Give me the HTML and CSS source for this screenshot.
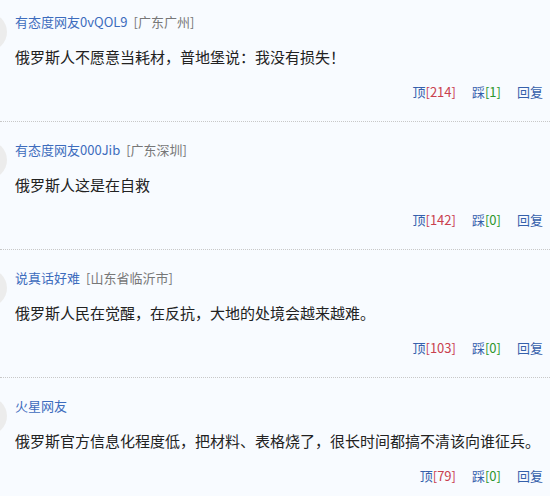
FILE: index.html
```html
<!DOCTYPE html>
<html>
<head>
<meta charset="utf-8">
<link rel="stylesheet" href="styles.css">
</head>
<body>
<div class="list">

	<div class="item">
		<div class="avatar"></div>
		<div class="body">
			<div class="user"><a class="name">有态度网友0vQOL9</a><span class="loc">[广东广州]</span></div>
			<div class="text">俄罗斯人不愿意当耗材，普地堡说：我没有损失！</div>
			<div class="ops">
				<a class="op">顶<span class="up">[214]</span></a>
				<a class="op">踩<span class="down">[1]</span></a>
				<a class="op">回复</a>
			</div>
		</div>
	</div>

	<div class="item">
		<div class="avatar"></div>
		<div class="body">
			<div class="user"><a class="name">有态度网友000Jib</a><span class="loc">[广东深圳]</span></div>
			<div class="text">俄罗斯人这是在自救</div>
			<div class="ops">
				<a class="op">顶<span class="up">[142]</span></a>
				<a class="op">踩<span class="down">[0]</span></a>
				<a class="op">回复</a>
			</div>
		</div>
	</div>

	<div class="item">
		<div class="avatar"></div>
		<div class="body">
			<div class="user"><a class="name">说真话好难</a><span class="loc">[山东省临沂市]</span></div>
			<div class="text">俄罗斯人民在觉醒，在反抗，大地的处境会越来越难。</div>
			<div class="ops">
				<a class="op">顶<span class="up">[103]</span></a>
				<a class="op">踩<span class="down">[0]</span></a>
				<a class="op">回复</a>
			</div>
		</div>
	</div>

	<div class="item">
		<div class="avatar"></div>
		<div class="body">
			<div class="user"><a class="name">火星网友</a></div>
			<div class="text">俄罗斯官方信息化程度低，把材料、表格烧了，很长时间都搞不清该向谁征兵。</div>
			<div class="ops">
				<a class="op">顶<span class="up">[79]</span></a>
				<a class="op">踩<span class="down">[0]</span></a>
				<a class="op">回复</a>
			</div>
		</div>
	</div>

</div>
</body>
</html>
```

FILE: styles.css
```css
body {
  margin: 0;
  background-color: #f8fbff;
  font-family: "Noto Sans CJK SC", sans-serif;
  color: #222222;
  overflow: hidden;
}

.list {
  display: flex;
  flex-direction: column;
}

.item {
  display: flex;
  gap: 8px;
  padding: 19px 7px 20px 0;
  border-bottom: 1px dotted #c8c8c8;
}

.item:first-child {
  padding-top: 13px;
}

.avatar {
  flex: none;
  width: 38px;
  height: 38px;
  margin-left: -31px;
  border-radius: 50%;
  background-color: #ececec;
}

.body {
  flex: 1;
  display: flex;
  flex-direction: column;
  gap: 15px;
}

.user {
  font-size: 13px;
  line-height: 18px;
  height: 18px;
}

.name {
  color: #3d6cbd;
}

.loc {
  color: #777777;
  margin-left: 6px;
}

.text {
  font-size: 15px;
  line-height: 22px;
  color: #222222;
}

.ops {
  display: flex;
  justify-content: flex-end;
  gap: 16px;
  font-size: 13px;
  line-height: 18px;
}

.op {
  color: #3560ab;
}

.up {
  color: #c9404e;
}

.down {
  color: #2c962c;
}
```
